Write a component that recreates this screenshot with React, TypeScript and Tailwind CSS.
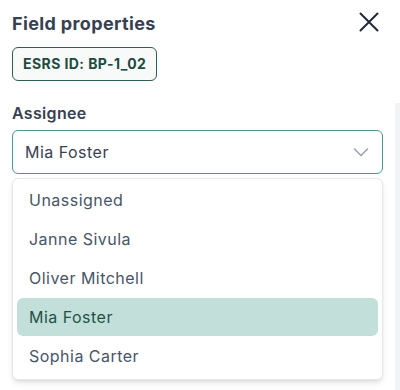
const people = ["Unassigned", "Janne Sivula", "Oliver Mitchell", "Mia Foster", "Sophia Carter"];

export default function App() {
  const selected = "Mia Foster";

  return (
    <div className="flex h-[390px] w-[400px] overflow-hidden bg-white font-['Inter',sans-serif]">
      <div className="flex w-[395px] flex-col px-3 pt-[10px]">
        {/* Header */}
        <div className="flex items-start justify-between">
          <h2 className="text-lg leading-7 font-bold tracking-[0.02em] text-[#374151]">Field properties</h2>
          <button className="mr-1 mt-[2px] text-[#1f2937]" aria-label="Close">
            <svg width="20" height="20" viewBox="0 0 20 20" fill="none" stroke="currentColor" strokeWidth="2" strokeLinecap="round">
              <path d="M1.5 1.5 18.5 18.5M18.5 1.5 1.5 18.5" />
            </svg>
          </button>
        </div>

        {/* Badge */}
        <div className="mt-[9px] flex">
          <span className="flex h-[34px] items-center rounded-md border border-[#2f5f54] bg-[#f8faf9] px-[10px] text-sm font-bold tracking-[0.03em] text-[#1e4b41]">
            ESRS ID: BP-1_02
          </span>
        </div>

        {/* Assignee */}
        <label className="mt-[20px] text-base leading-6 font-semibold tracking-[0.02em] text-[#374151]">Assignee</label>
        <div className="mt-[5px] flex h-[44px] items-center justify-between rounded-md border border-[#4a9a8b] px-3">
          <span className="text-base tracking-[0.03em] text-[#374151]">{selected}</span>
          <svg className="mr-[1px]" width="16" height="9" viewBox="0 0 16 9" fill="none" stroke="#9ca3af" strokeWidth="1.6" strokeLinecap="round" strokeLinejoin="round">
            <path d="M1.5 1 8 7.5 14.5 1" />
          </svg>
        </div>

        {/* Options */}
        <ul className="mt-[4px] flex flex-col gap-px rounded-md border border-[#e5e7eb] bg-white px-1 pt-[2px] pb-[4px] shadow-md">
          {people.map((name) => (
            <li
              key={name}
              className={
                name === selected
                  ? "flex h-[38px] items-center rounded-md bg-[#c3dfd9] pl-3 text-base tracking-[0.03em] text-[#1f5247]"
                  : "flex h-[38px] items-center rounded-md pl-3 text-base tracking-[0.03em] text-[#475569]"
              }
            >
              {name}
            </li>
          ))}
        </ul>
      </div>

      {/* Scroll track */}
      <div className="flex w-[5px] flex-col">
        <div className="h-[103px]" />
        <div className="flex-1 bg-[#f1f3f6]" />
      </div>
    </div>
  );
}
